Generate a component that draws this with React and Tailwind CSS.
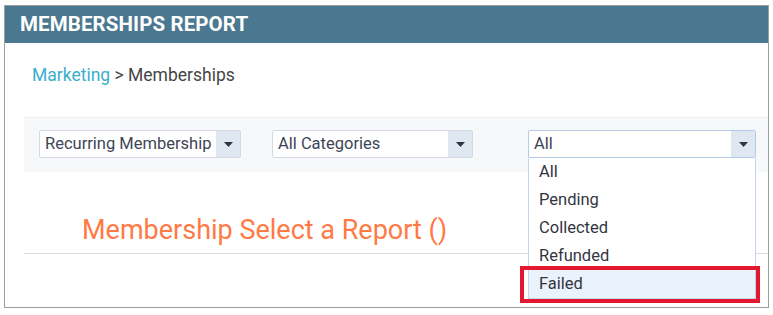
import React from "react";

const font = { fontFamily: "Roboto, 'Liberation Sans', sans-serif" };

function Select({ label, width, open }) {
  return (
    <div
      className={`relative flex h-[28px] items-stretch border bg-white ${
        open ? "border-[#b5cbe4]" : "border-[#d3dae3]"
      } rounded-[2px]`}
      style={{ width }}
    >
      <div className="flex flex-1 items-center pl-[5px] text-[16.5px] text-[#3e4556] whitespace-nowrap overflow-hidden">
        {label}
      </div>
      <div className="flex w-[24px] items-center justify-center bg-[#dfe7f1]">
        <svg width="9" height="5" viewBox="0 0 9 5">
          <path d="M0 0 L9 0 L4.5 5 Z" fill="#2f3440" />
        </svg>
      </div>
    </div>
  );
}

export default function App() {
  const items = ["All", "Pending", "Collected", "Refunded", "Failed"];
  return (
    <div className="w-[773px] h-[315px] bg-white pt-[5px] pl-[4px]" style={font}>
      <div className="w-[765px] h-[303px] border border-[#9c9c9c] flex flex-col">
        <div className="h-[37px] bg-[#4a7890] flex items-center pl-[15px] text-white font-bold text-[20.5px] tracking-[0.1px]">
          MEMBERSHIPS REPORT
        </div>
        <div className="pl-[27px] pt-[20px] text-[17.5px] leading-[24px]">
          <span className="text-[#3aaecb]">Marketing</span>
          <span className="text-[#454545]"> &gt; Memberships</span>
        </div>
        <div className="ml-[19px] mt-[30px] h-[55px] bg-[#f7f8f9] border-t border-[#eceef1] flex items-start pl-[15px] pt-[12px]">
          <Select label="Recurring Membership" width="202px" />
          <div className="ml-[31px]">
            <Select label="All Categories" width="201px" />
          </div>
          <div className="ml-[55px] relative">
            <Select label="All" width="228px" open />
            <div className="absolute left-0 top-[28px] w-[228px] border border-t-0 border-[#c3d5ea] bg-white z-10">
              {items.map((it) => (
                <div
                  key={it}
                  className={`h-[28px] flex items-center pl-[10px] text-[16.5px] text-[#33363f] ${
                    it === "Failed" ? "bg-[#eaf2fb]" : ""
                  }`}
                >
                  {it}
                </div>
              ))}
            </div>
            <div className="absolute left-[-8px] top-[136px] w-[240px] h-[37px] border-[4px] border-[#e3172f] z-20" />
          </div>
        </div>
        <div className="ml-[19px] mt-[41px] pl-[58px] pb-[6px] border-b border-[#dcdcdc] text-[27px] leading-[34px] text-[#ff7a45]">
          Membership Select a Report ()
        </div>
      </div>
    </div>
  );
}
